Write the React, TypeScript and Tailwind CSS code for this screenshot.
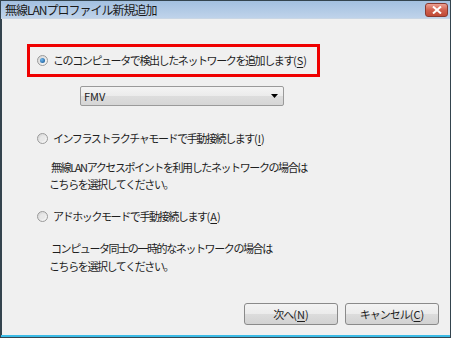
const font = "font-['Noto_Sans_CJK_JP','Noto_Sans',sans-serif]";

const Radio = ({ checked }: { checked?: boolean }) => (
  <span className="flex h-[11px] w-[11px] shrink-0 items-center justify-center rounded-full border border-[#9a9a9a] bg-gradient-to-br from-[#d4d4d4] to-[#fbfbfb]">
    {checked ? (
      <span className="h-[5px] w-[5px] rounded-full bg-[radial-gradient(circle_at_35%_35%,#6fb7ee,#0f4f8c)]" />
    ) : (
      <span className="h-[5px] w-[5px] rounded-full bg-[#e8e8e8]" />
    )}
  </span>
);

const Key = ({ k }: { k: string }) => (
  <span className="tracking-normal">
    (<span className="underline underline-offset-[2px]">{k}</span>)
  </span>
);

const Button = ({ label, k }: { label: string; k: string }) => (
  <button
    type="button"
    className="flex h-[22px] w-[94px] items-center justify-center rounded-[3px] border border-[#8a8a8a] bg-[linear-gradient(#f3f3f3_0%,#ebebeb_50%,#dcdcdc_51%,#d2d2d2_100%)] text-[11px] tracking-[-1px] text-[#1e1e1e]"
  >
    {label}
    <Key k={k} />
  </button>
);

export default function App() {
  return (
    <div
      className={`${font} flex h-[338px] w-[451px] flex-col overflow-hidden border border-[#34444e] bg-[#f0f0f0] text-[11px] tracking-[-1.4px] text-[#1e1e1e]`}
    >
      {/* title bar */}
      <div className="flex h-[18px] shrink-0 items-center justify-between border-b border-[#c9d6e4] bg-gradient-to-b from-[#a3c0e0] to-[#bfd3ea] pl-[4px] pr-[2px]">
        <span className="text-[12px] tracking-[-1px] text-[#1a1a1a]">無線LANプロファイル新規追加</span>
        <span className="flex h-[14px] w-[23px] items-center justify-center rounded-[3px] border border-[#8a3a30] bg-gradient-to-b from-[#eba093] via-[#d0604e] to-[#c04a36]">
          <svg width="10" height="8" viewBox="0 0 10 8">
            <path d="M1 0.5 L9 7.5 M9 0.5 L1 7.5" stroke="#ffffff" strokeWidth="2" />
          </svg>
        </span>
      </div>

      {/* body */}
      <div className="flex flex-1 flex-col border-l border-[#34444e] pl-[25px]">
        <div className="mt-[25px] flex h-[33px] w-[293px] items-center gap-[5px] border-[3px] border-[#ef0000] pl-[7px]">
          <Radio checked />
          <span>
            このコンピュータで検出したネットワークを追加します<Key k="S" />
          </span>
        </div>

        <div className="ml-[53px] mt-[9px] flex h-[20px] w-[204px] items-center justify-between rounded-[2px] border border-[#9a9a9a] bg-[linear-gradient(#f4f4f4_0%,#ebebeb_50%,#dddddd_51%,#d6d6d6_100%)] pl-[3px] pr-[5px]">
          <span className="tracking-normal">FMV</span>
          <svg width="7" height="4" viewBox="0 0 7 4">
            <path d="M0 0 H7 L3.5 4 Z" fill="#000" />
          </svg>
        </div>

        <div className="ml-[10px] mt-[24px] flex h-[16px] items-center gap-[5px]">
          <Radio />
          <span>
            インフラストラクチャモードで手動接続します<Key k="I" />
          </span>
        </div>

        <div className="ml-[22px] mt-[13px] leading-[17px]">
          <div className="pl-[2px]">無線LANアクセスポイントを利用したネットワークの場合は</div>
          <div>こちらを選択してください。</div>
        </div>

        <div className="ml-[10px] mt-[15px] flex h-[16px] items-center gap-[5px]">
          <Radio />
          <span>
            アドホックモードで手動接続します<Key k="A" />
          </span>
        </div>

        <div className="ml-[22px] mt-[15px] leading-[18px]">
          <div className="pl-[2px]">コンピュータ同士の一時的なネットワークの場合は</div>
          <div>こちらを選択してください。</div>
        </div>

        <div className="mt-auto mb-[10px] flex justify-end gap-[7px] pr-[11px]">
          <Button label="次へ" k="N" />
          <Button label="キャンセル" k="C" />
        </div>
      </div>

      <div className="h-[2px] shrink-0 bg-[#3bbbe6]" />
    </div>
  );
}
